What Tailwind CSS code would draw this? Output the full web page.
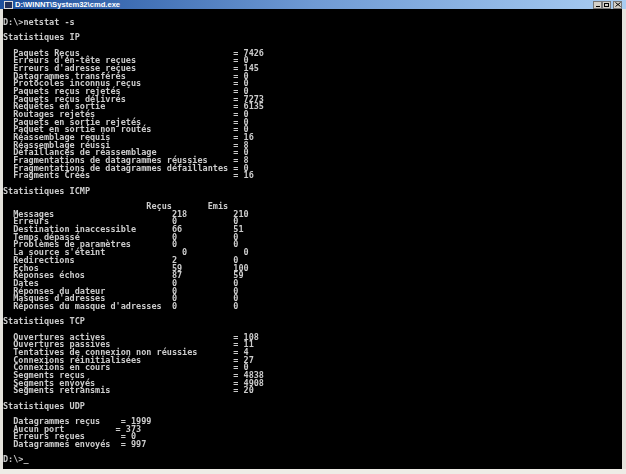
<!doctype html>
<html lang="fr">
<head>
<meta charset="utf-8">
<title>cmd.exe</title>
<script src="https://cdn.jsdelivr.net/npm/@tailwindcss/browser@4"></script>
</head>
<body class="bg-white">
<div class="w-[626px] h-[474px] flex flex-col overflow-hidden bg-[#d4d0c8]">
  <!-- title bar -->
  <div class="h-[9px] shrink-0 flex items-center justify-between bg-gradient-to-r from-[#1c4f9c] via-[#6f9ad4] to-[#a9cdf2] pl-[4px] pr-[4px]">
    <div class="flex items-center gap-[2px]">
      <div class="w-[9px] h-[8px] bg-[#20305a] border border-[#d8d8d8]"></div>
      <span class="font-['Liberation_Sans',sans-serif] font-bold text-[7.6px] leading-[9px] text-white whitespace-pre">D:\WINNT\System32\cmd.exe</span>
    </div>
    <div class="flex">
      <div class="w-[9px] h-[8px] bg-[#d4d0c8] border border-[#777] flex items-end justify-center pb-[1px]"><div class="w-[4px] h-[1px] bg-black"></div></div>
      <div class="w-[9px] h-[8px] bg-[#d4d0c8] border border-[#777] flex items-center justify-center"><div class="w-[5px] h-[4px] border border-black"></div></div>
      <div class="w-[9px] h-[8px] ml-[2px] bg-[#d4d0c8] border border-[#777] flex items-center justify-center">
        <svg width="6" height="5" viewBox="0 0 6 5"><path d="M0.5 0.5L5.5 4.5M5.5 0.5L0.5 4.5" stroke="#000" stroke-width="1"/></svg>
      </div>
    </div>
  </div>
  <div class="flex-1 min-h-0 flex pl-[3px] pr-[4px] bg-[#e4e2dc] border-b-[5px] border-[#eeece6]">
    <pre class="flex-1 pt-[10px] bg-black text-[#cccccc] font-['DejaVu_Sans_Mono',monospace] font-bold text-[8.5px] leading-[7.67px] blur-[0.3px] overflow-hidden">D:\&gt;netstat -s

Statistiques IP

  Paquets Reçus                              = 7426
  Erreurs d'en-tête reçues                   = 0
  Erreurs d'adresse reçues                   = 145
  Datagrammes transférés                     = 0
  Protocoles inconnus reçus                  = 0
  Paquets reçus rejetés                      = 0
  Paquets reçus délivrés                     = 7273
  Requêtes en sortie                         = 6135
  Routages rejetés                           = 0
  Paquets en sortie rejetés                  = 0
  Paquet en sortie non routés                = 0
  Réassemblage requis                        = 16
  Réassemblage réussi                        = 8
  Défaillances de réassemblage               = 0
  Fragmentations de datagrammes réussies     = 8
  Fragmentations de datagrammes défaillantes = 0
  Fragments Créés                            = 16

Statistiques ICMP

                            Reçus       Emis
  Messages                       218         210
  Erreurs                        0           0
  Destination inaccessible       66          51
  Temps dépassé                  0           0
  Problèmes de paramètres        0           0
  La source s'éteint               0           0
  Redirections                   2           0
  Echos                          59          100
  Réponses échos                 87          59
  Dates                          0           0
  Réponses du dateur             0           0
  Masques d'adresses             0           0
  Réponses du masque d'adresses  0           0

Statistiques TCP

  Ouvertures actives                         = 108
  Ouvertures passives                        = 11
  Tentatives de connexion non réussies       = 4
  Connexions réinitialisées                  = 27
  Connexions en cours                        = 0
  Segments reçus                             = 4838
  Segments envoyés                           = 4908
  Segments retransmis                        = 20

Statistiques UDP

  Datagrammes reçus    = 1999
  Aucun port          = 373
  Erreurs reçues       = 0
  Datagrammes envoyés  = 997

D:\&gt;_</pre>
  </div>
</div>
</body>
</html>
